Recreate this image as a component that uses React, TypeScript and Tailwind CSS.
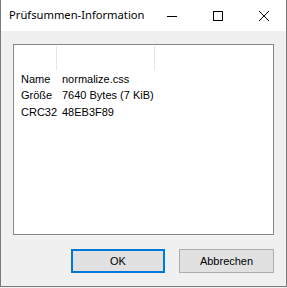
import React from "react";

export default function App() {
  const rows: [string, string][] = [
    ["Name", "normalize.css"],
    ["Größe", "7640 Bytes (7 KiB)"],
    ["CRC32", "48EB3F89"],
  ];
  return (
    <div className="w-[287px] h-[288px] bg-[#f0f0f0] overflow-hidden">
      <div className="w-[287px] h-[287px] flex flex-col border-l border-r border-b border-[#7a7a7a]">
        <div className="h-[31px] bg-white flex items-center shrink-0">
          <div
            className="pl-[8px] flex-1 min-w-0 whitespace-nowrap text-[11.2px] text-black"
            style={{ fontFamily: '"Noto Sans", "Open Sans", sans-serif' }}
          >
            Prüfsummen-Information
          </div>
          <div className="w-[46px] h-[31px] flex items-center justify-center shrink-0">
            <svg width="10" height="10" viewBox="0 0 10 10">
              <line x1="0" y1="5.5" x2="10" y2="5.5" stroke="#000" strokeWidth="1" />
            </svg>
          </div>
          <div className="w-[46px] h-[31px] flex items-center justify-center shrink-0">
            <svg width="10" height="10" viewBox="0 0 10 10">
              <rect x="0.5" y="0.5" width="9" height="9" fill="none" stroke="#000" strokeWidth="1" />
            </svg>
          </div>
          <div className="w-[45px] h-[31px] flex items-center justify-center shrink-0">
            <svg width="10" height="10" viewBox="0 0 10 10">
              <line x1="0" y1="0" x2="10" y2="10" stroke="#000" strokeWidth="1" />
              <line x1="10" y1="0" x2="0" y2="10" stroke="#000" strokeWidth="1" />
            </svg>
          </div>
        </div>
        <div
          className="flex-1 bg-[#f0f0f0] pl-[12px] pt-[13px] flex flex-col"
          style={{ fontFamily: '"Liberation Sans", Arial, sans-serif' }}
        >
          <div className="w-[261px] h-[191px] bg-white border border-[#828790] pt-[1px]">
            <div className="h-[24px] flex">
              <div className="w-[43px] border-r border-[#e5e5e5]" />
              <div className="w-[98px] border-r border-[#e5e5e5]" />
            </div>
            <div className="flex flex-col pt-[1px]">
              {rows.map(([k, v]) => (
                <div key={k} className="h-[16.5px] flex items-center text-[11px] leading-none text-black">
                  <div className="w-[48px] pl-[7px]">{k}</div>
                  <div>{v}</div>
                </div>
              ))}
            </div>
          </div>
          <div className="flex mt-[14px] pl-[58px] gap-[14px] text-[11px] text-black">
            <div className="w-[94px] h-[24px] bg-[#e1e1e1] border-2 border-[#0078d7] flex items-center justify-center">
              OK
            </div>
            <div className="w-[95px] h-[24px] bg-[#e1e1e1] border border-[#adadad] flex items-center justify-center">
              Abbrechen
            </div>
          </div>
        </div>
      </div>
    </div>
  );
}
